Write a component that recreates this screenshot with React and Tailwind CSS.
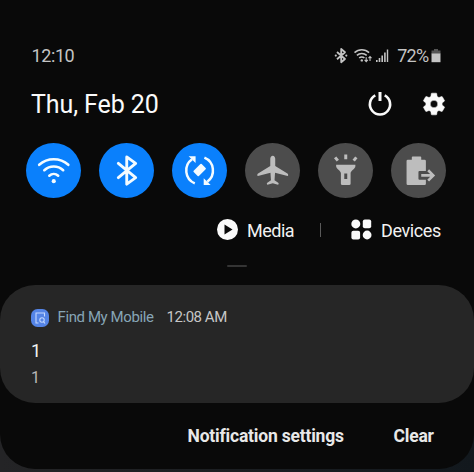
function StatusBar() {
  return (
    <div className="flex h-6 items-center pr-[33px] pl-[31.5px] text-[#c4c4c4]">
      <span className="text-[18px] tracking-[-0.4px]">12:10</span>
      <div className="ml-auto flex items-center">
        <svg width="14" height="16" viewBox="0 0 14 16" fill="none" stroke="currentColor" strokeWidth="1.8">
          <path d="M3 4 11 11 7.2 14.2V1L11 4.2 3 11.2" strokeLinejoin="round" />
          <circle cx="1.8" cy="7.6" r="1.1" fill="currentColor" stroke="none" />
          <circle cx="12.3" cy="7.6" r="1.1" fill="currentColor" stroke="none" />
        </svg>
        <svg className="ml-[6px]" width="18" height="16" viewBox="0 0 18 16" fill="none" stroke="currentColor" strokeWidth="1.5">
          <path d="M.5 4.6a10.5 10.5 0 0 1 14.6 0M2.9 7.4a7 7 0 0 1 9.8 0M5.2 10a3.6 3.6 0 0 1 5.2 0" />
          <circle cx="7.8" cy="12.4" r="1.2" fill="currentColor" stroke="none" />
          <path d="M12.2 9.3v4.2M10.6 11.9l1.6 1.7 1.6-1.7M16 13V8.6M14.5 10.2l1.5-1.6 1.5 1.6" strokeWidth="1.1" />
        </svg>
        <svg className="ml-[4px]" width="13" height="14" viewBox="0 0 13 14" fill="currentColor">
          <path d="M0 11h1.6v2H0zM2.7 9h1.6v4H2.7zM5.4 6.5H7V13H5.4zM8.1 3.5h1.6V13H8.1zM10.8.5h1.4V13h-1.4z" />
        </svg>
        <span className="ml-[8px] text-[18px] tracking-[-0.7px]">72%</span>
        <svg className="ml-[2.5px]" width="10" height="14" viewBox="0 0 10 14" fill="currentColor">
          <path d="M3 0h4v1.5h2.5V5H.5V1.5H3z" fill="#555" />
          <path d="M.5 4.5h9v8.7H.5z" />
        </svg>
      </div>
    </div>
  )
}

function DateRow() {
  return (
    <div className="mt-[16px] flex h-10 items-center pr-[27px] pl-[31px] text-[#fafafa]">
      <span className="pt-[3px] text-[25px] tracking-[-0.1px]">Thu, Feb 20</span>
      <svg className="ml-auto" width="26" height="26" viewBox="0 0 26 26" fill="none" stroke="currentColor" strokeWidth="2.6">
        <path d="M8.3 4.4a10.1 10.1 0 1 0 9.4 0" />
        <path d="M13 1v9" strokeWidth="3" />
      </svg>
      <svg className="ml-[28px]" width="26" height="26" viewBox="0 0 24 24" fill="currentColor">
        <path
          d="M19.43 12.98c.04-.32.07-.64.07-.98s-.03-.66-.07-.98l2.11-1.65a.5.5 0 0 0 .12-.64l-2-3.46a.5.5 0 0 0-.61-.22l-2.49 1a7.3 7.3 0 0 0-1.69-.98l-.38-2.65A.49.49 0 0 0 14 2h-4a.49.49 0 0 0-.49.42l-.38 2.65c-.61.25-1.17.59-1.69.98l-2.49-1a.5.5 0 0 0-.61.22l-2 3.46a.5.5 0 0 0 .12.64l2.11 1.65a8 8 0 0 0 0 1.96l-2.11 1.65a.5.5 0 0 0-.12.64l2 3.46c.12.22.39.3.61.22l2.49-1c.52.4 1.08.73 1.69.98l.38 2.65c.03.24.24.42.49.42h4c.25 0 .46-.18.49-.42l.38-2.65a7.7 7.7 0 0 0 1.69-.98l2.49 1c.23.09.49 0 .61-.22l2-3.46a.5.5 0 0 0-.12-.64zM12 15.5a3.5 3.5 0 1 1 0-7 3.5 3.5 0 0 1 0 7"
          stroke="currentColor"
          strokeWidth=".5"
        />
      </svg>
    </div>
  )
}

function WifiIcon() {
  return (
    <svg viewBox="0 0 56 56" fill="none" stroke="currentColor" strokeWidth="2.6" strokeLinecap="round">
      <path d="M13.3 22a22 22 0 0 1 29.4 0M18.5 27.5a14 14 0 0 1 19 0M23.5 33a6.8 6.8 0 0 1 9 0" />
      <circle cx="28" cy="38.5" r="2.1" fill="currentColor" stroke="none" />
    </svg>
  )
}

function BluetoothIcon() {
  return (
    <svg viewBox="0 0 56 56" fill="none" stroke="currentColor" strokeWidth="2.9" strokeLinecap="round" strokeLinejoin="round">
      <path d="M19.5 20.5 37 35l-9 6.5V14l9 6.5L19.5 35" />
    </svg>
  )
}

function RotateIcon() {
  return (
    <svg viewBox="0 0 56 56" fill="none" stroke="currentColor" strokeWidth="2.5">
      <path d="M23 40.8A14 14 0 0 1 20.2 16.5M32.7 14.8A14 14 0 0 1 35.6 39" />
      <path d="M16.8 13.3h7v6.8zM39 42.3h-7v-6.8z" fill="currentColor" stroke="none" />
      <path d="M29.3 21.9 33.3 25.9 26.5 32.7 22.5 28.7z" fill="currentColor" strokeWidth="1.8" strokeLinejoin="round" />
    </svg>
  )
}

function AirplaneIcon() {
  return (
    <svg viewBox="0 0 56 56" fill="currentColor">
      <path d="M28 12.8c-1.5 0-2.5 1.3-2.5 3.2v7.3L13.2 30.9c-.9.6-1.2 2.5-.2 2.4l12.7-3.2.5 7.4-3.7 2.7c-.7.6-.6 1.9.2 1.8L28 40.7l5.3 1.3c.8.1.9-1.2.2-1.8l-3.7-2.7.5-7.4L43 33.3c1 .1.7-1.8-.2-2.4l-12.3-7.6V16c0-1.9-1-3.2-2.5-3.2z" />
    </svg>
  )
}

function FlashlightIcon() {
  return (
    <svg viewBox="0 0 56 56" fill="currentColor">
      <path fillRule="evenodd" d="M18.3 22h19.4v1.5c0 2.5-4.8 4.5-4.8 7V41a1.5 1.5 0 0 1-1.5 1.5h-6.8a1.5 1.5 0 0 1-1.5-1.5V30.5c0-2.5-4.8-4.5-4.8-7zM26.5 30.8v5.4h3v-5.4z" />
      <path d="M28 11.5v4.8M17.3 14.5l2.7 3.3M38.7 14.5l-2.7 3.3" stroke="currentColor" strokeWidth="3" />
    </svg>
  )
}

function BatteryShareIcon() {
  return (
    <svg viewBox="0 0 56 56" fill="currentColor">
      <path d="M21 14.5a.8.8 0 0 1 .8-.8h7.9a.8.8 0 0 1 .8.8v2.3h3.4a1.3 1.3 0 0 1 1.3 1.3v10.2h-6.5a1 1 0 0 0-1 1V36a1 1 0 0 0 1 1h6.5v4a1.3 1.3 0 0 1-1.3 1.3H17a1.3 1.3 0 0 1-1.3-1.3V18.1a1.3 1.3 0 0 1 1.3-1.3h4z" />
      <path d="M30.5 32.7h12M37.5 27.5l5.2 5.2-5.2 5.2" fill="none" stroke="currentColor" strokeWidth="2.6" />
    </svg>
  )
}

const toggles = [
  { name: 'Wi-Fi', Icon: WifiIcon, on: true },
  { name: 'Bluetooth', Icon: BluetoothIcon, on: true },
  { name: 'Auto rotate', Icon: RotateIcon, on: true },
  { name: 'Airplane mode', Icon: AirplaneIcon, on: false },
  { name: 'Flashlight', Icon: FlashlightIcon, on: false },
  { name: 'Power share', Icon: BatteryShareIcon, on: false },
]

function QuickToggles() {
  return (
    <div className="mt-[19px] flex gap-[17.5px] pl-[25.5px]">
      {toggles.map(({ name, Icon, on }) => (
        <button
          key={name}
          aria-label={name}
          className={`size-[55.5px] shrink-0 rounded-full ${on ? 'bg-[#0a80fc] text-[#f4fbff]' : 'bg-[#4c4c4c] text-[#bdbdbd]'}`}
        >
          <Icon />
        </button>
      ))}
    </div>
  )
}

function MediaRow() {
  return (
    <div className="mt-[19.5px] flex h-6 items-center pl-[217px] text-[18px] text-[#f2f2f2]">
      <svg width="21" height="21" viewBox="0 0 21 21">
        <circle cx="10.5" cy="10.5" r="10.5" fill="#fafafa" />
        <path d="M7.5 5.5v10l8-5z" fill="#090909" />
      </svg>
      <span className="ml-[9px] w-[47px] pt-px tracking-[-0.5px]">Media</span>
      <span className="ml-[25.5px] h-[14px] w-px bg-[#5a5a5a]" />
      <svg className="ml-[30.5px]" width="21" height="21" viewBox="0 0 21 21" fill="#fafafa">
        <circle cx="4.8" cy="4.9" r="4.5" />
        <rect x="11.8" y=".5" width="8.4" height="8.7" rx="2" />
        <rect x=".4" y="11.7" width="8.7" height="8.7" rx="2" />
        <circle cx="16.1" cy="16" r="4.4" />
      </svg>
      <span className="ml-[9px] pt-px tracking-[-0.4px]">Devices</span>
    </div>
  )
}

function Notification() {
  return (
    <div className="mt-[17.5px] h-[118px] rounded-[35px] bg-[#262626] pt-[23px] pl-[31px]">
      <div className="flex h-5 items-center text-[15px]">
        <svg width="18" height="18" viewBox="0 0 18 18" fill="none" stroke="#c3d8ff" strokeWidth="1.1">
          <rect width="18" height="18" rx="6.5" fill="#5484e6" stroke="none" />
          <path d="M7.5 14H5V4h8.5v3.5" />
          <circle cx="11" cy="11" r="2.2" />
          <path d="m12.5 12.6 1.5 1.9" />
        </svg>
        <span className="ml-[8.5px] w-[96px] whitespace-nowrap text-[#86a5b6] tracking-[-0.4px]">Find My Mobile</span>
        <span className="ml-[13px] whitespace-nowrap text-[#c6c6c6] tracking-[-0.45px]">12:08 AM</span>
      </div>
      <p className="mt-[11px] text-[18px] leading-[24px] text-[#f2f2f2]">1</p>
      <p className="mt-[4px] text-[16px] leading-[22px] text-[#b8b8b8]">1</p>
    </div>
  )
}

export default function App() {
  return (
    <div className="h-[472px] w-[474px] overflow-hidden bg-linear-to-r from-[#242426] to-[#12181d] font-['Roboto','Liberation_Sans',sans-serif]">
      <div className="h-[468.5px] rounded-b-[35px] bg-[#090909] pt-[43.5px]">
        <StatusBar />
        <DateRow />
        <QuickToggles />
        <MediaRow />
        <div className="mt-[23px] ml-[226.5px] h-[2.5px] w-5 rounded-full bg-[#343434]" />
        <Notification />
        <div className="mt-[21.5px] flex h-6 items-center pl-[187.5px] text-[17.5px] font-bold text-[#e8e8e8]">
          <span className="w-[157px] whitespace-nowrap tracking-[-0.2px]">Notification settings</span>
          <span className="ml-[49px] tracking-[-0.2px]">Clear</span>
        </div>
      </div>
    </div>
  )
}
